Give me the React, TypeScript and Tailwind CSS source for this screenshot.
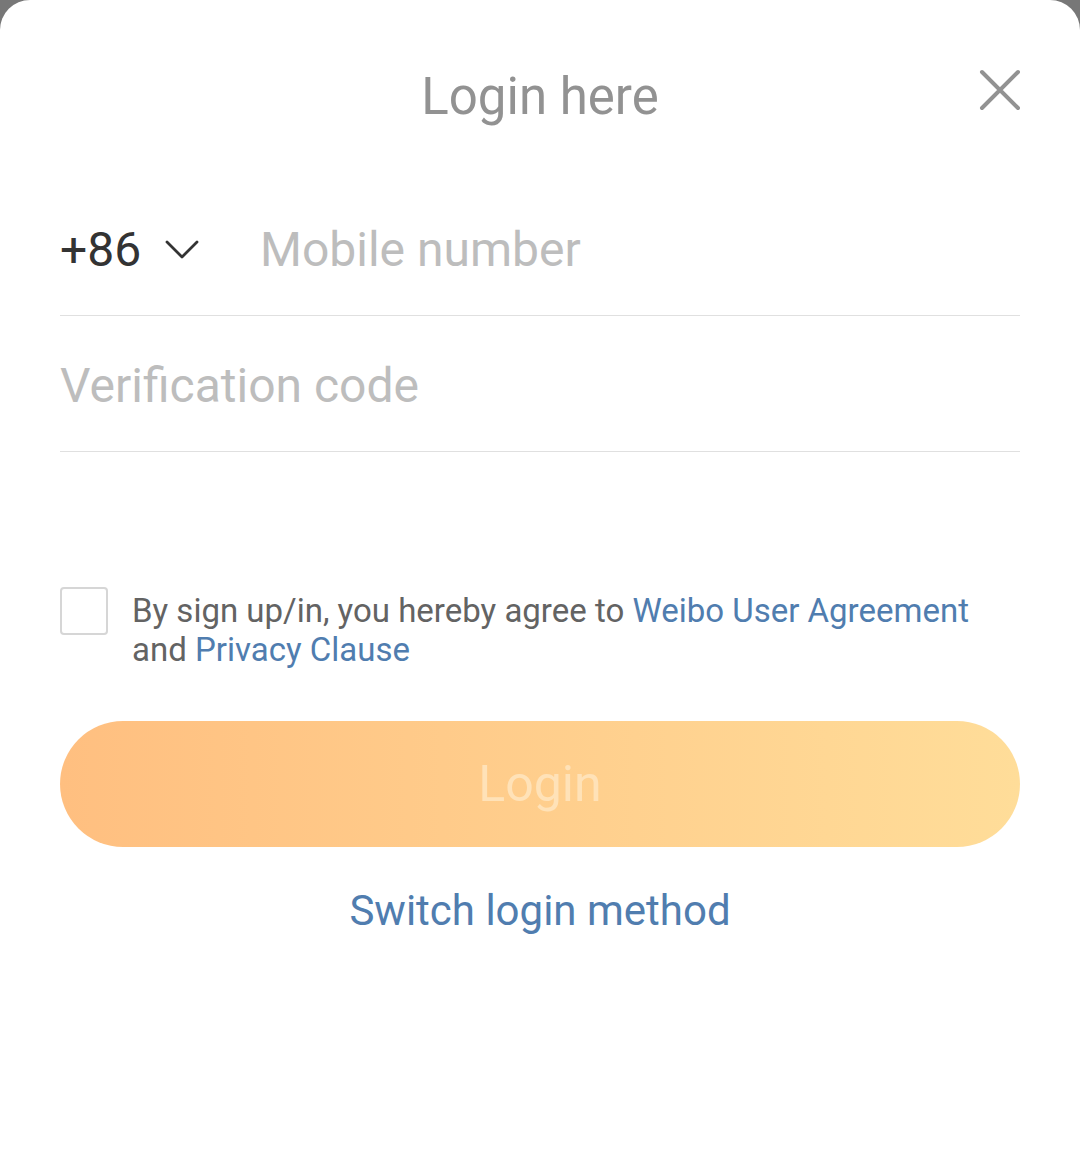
export default function App() {
  return (
    <div className="min-h-screen bg-[#777777] font-['Roboto',sans-serif]">
      <main className="min-h-screen rounded-t-[30px] bg-white px-[60px] pb-16">
        <header className="grid grid-cols-[48px_1fr_48px] pt-[66px]">
          <h1 className="col-start-2 text-center text-[51px] leading-[62px] text-[#929292]">Login here</h1>
          <button type="button" aria-label="Close" className="-mr-1 h-12 w-12 justify-self-end">
            <svg viewBox="0 0 48 48" className="h-12 w-12" fill="none" stroke="#929292" strokeWidth="4" strokeLinecap="round">
              <path d="M6 6 42 42M42 6 6 42" />
            </svg>
          </button>
        </header>
        <form onSubmit={(e) => e.preventDefault()}>
          <div className="mt-14 flex h-[132px] items-center border-b border-[#e0e0e0]">
            <button type="button" aria-label="Country code +86" className="flex w-[200px] items-center gap-6 text-[48px] leading-[56px] text-[#333333]">
              +86
              <svg viewBox="0 0 34 20" className="h-5 w-[34px]" fill="none" stroke="#333333" strokeWidth="2.800" strokeLinecap="round" strokeLinejoin="round">
                <path d="M2 2 17 17 32 2" />
              </svg>
            </button>
            <input type="tel" aria-label="Mobile number" placeholder="Mobile number" className="h-14 min-w-0 flex-1 text-[48px] outline-none placeholder:text-[#bdbdbd]" />
          </div>
          <div className="flex h-[136px] items-center border-b border-[#e0e0e0] pt-1">
            <input type="text" aria-label="Verification code" placeholder="Verification code" className="h-14 min-w-0 flex-1 text-[48px] outline-none placeholder:text-[#bdbdbd]" />
          </div>
          <div className="mt-[135px] flex items-start gap-6">
            <input id="agree" type="checkbox" className="h-12 w-12 shrink-0 appearance-none rounded-[4px] border-2 border-[#d6d6d6] bg-white checked:bg-[#ff8200]" />
            <label htmlFor="agree" className="pt-1 text-[33px] leading-[39px] text-[#636363]">
              By sign up/in, you hereby agree to <a href="#agreement" className="text-[#507daf]">Weibo User Agreement</a> and <a href="#privacy" className="text-[#507daf]">Privacy Clause</a>
            </label>
          </div>
          <button type="submit" className="mt-[52px] h-[126px] w-full rounded-full bg-linear-to-r from-[#ffbf80] to-[#ffdd99] text-[50px] text-[#ffe2b8]">Login</button>
        </form>
        <div className="mt-[39px] text-center">
          <a href="#switch" className="text-[42px] leading-[50px] text-[#507daf]">Switch login method</a>
        </div>
      </main>
    </div>
  );
}
